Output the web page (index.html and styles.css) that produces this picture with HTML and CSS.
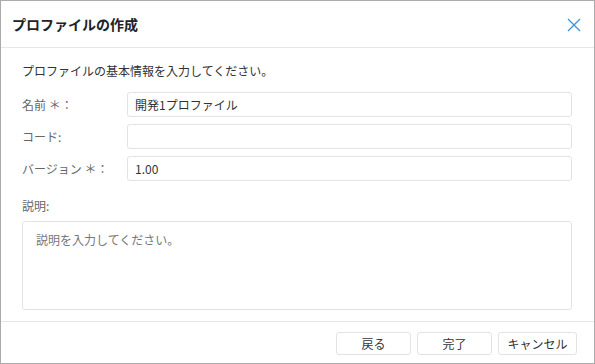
FILE: index.html
```html
<!DOCTYPE html>
<html>
<head>
    <title>プロファイルの作成</title>
    <link rel="stylesheet" href="styles.css">
</head>
<body>
    <div class="dialog">
        <div class="header">
            <h1>プロファイルの作成</h1>
            <span class="close">
                <svg width="14" height="14" viewBox="0 0 14 14">
                    <path d="M1 1 L13 13 M13 1 L1 13" stroke="#3f95dc" stroke-width="1.4" fill="none"/>
                </svg>
            </span>
        </div>
        <div class="content">
            <p class="intro">プロファイルの基本情報を入力してください。</p>
            <div class="form-row">
                <label>名前 ＊：</label>
                <input type="text" value="開発1プロファイル">
            </div>
            <div class="form-row">
                <label>コード:</label>
                <input type="text">
            </div>
            <div class="form-row">
                <label>バージョン ＊：</label>
                <input type="text" value="1.00">
            </div>
            <div class="desc">
                <label>説明:</label>
                <textarea placeholder="説明を入力してください。"></textarea>
            </div>
        </div>
        <div class="footer">
            <button>戻る</button>
            <button>完了</button>
            <button class="wide">キャンセル</button>
        </div>
    </div>
</body>
</html>
```
FILE: styles.css
```css
* {
    margin: 0;
    padding: 0;
    box-sizing: border-box;
}
body {
    font-family: "Noto Sans CJK JP", "Noto Sans", sans-serif;
    font-size: 12px;
    color: #333;
    background: #fff;
}
.dialog {
    width: 595px;
    height: 364px;
    border: 1px solid #ababab;
    display: flex;
    flex-direction: column;
}
.header {
    height: 47px;
    flex-shrink: 0;
    border-bottom: 1px solid #e6e6e6;
    display: flex;
    align-items: center;
    justify-content: space-between;
    padding: 0 13px 0 11px;
}
.header h1 {
    font-size: 14px;
    font-weight: 700;
    color: #222;
    padding-bottom: 1px;
}
.close {
    display: flex;
    margin-top: 1px;
}
.content {
    flex: 1;
    padding: 14px 22px 0 21px;
}
.intro {
    line-height: 18px;
    margin-bottom: 12px;
    color: #333;
}
.form-row {
    display: flex;
    align-items: center;
    margin-bottom: 7px;
}
.form-row label {
    width: 105px;
    color: #666;
}
.form-row input {
    flex: 1;
    height: 25px;
    border: 1px solid #e3e3e3;
    border-radius: 3px;
    padding: 0 7px;
    font-family: inherit;
    font-size: 12px;
    color: #333;
}
.desc {
    margin-top: 16px;
}
.desc label {
    display: block;
    color: #666;
    line-height: 18px;
    margin-bottom: 6px;
}
.desc textarea {
    display: block;
    width: 100%;
    height: 89px;
    border: 1px solid #e3e3e3;
    border-radius: 3px;
    padding: 9px 13px;
    font-family: inherit;
    font-size: 12px;
    resize: none;
}
.desc textarea::placeholder {
    color: #777;
}
.footer {
    height: 42px;
    flex-shrink: 0;
    border-top: 1px solid #e6e6e6;
    display: flex;
    justify-content: flex-end;
    gap: 6px;
    padding: 10px 17px 0 0;
}
.footer button {
    width: 75px;
    height: 23px;
    border: 1px solid #e3e3e3;
    border-radius: 3px;
    background: #fff;
    font-family: inherit;
    font-size: 12px;
    color: #333;
}
.footer button.wide {
    width: 79px;
}
```
